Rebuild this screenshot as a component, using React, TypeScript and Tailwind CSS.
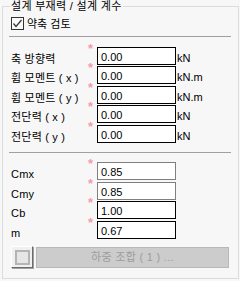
import React from 'react'

const font = { fontFamily: '"Liberation Sans", "Noto Sans CJK KR", sans-serif' }

type RowProps = {
  label: string
  value: string
  unit?: string
  mt: string
  gray?: boolean
  latin?: boolean
}

function FieldRow({ label, value, unit, mt, gray, latin }: RowProps) {
  return (
    <div className={`flex items-end ${mt}`}>
      <span className={`w-[86px] text-[11px] text-black whitespace-pre tracking-[0.2px] ${latin ? 'leading-none' : 'leading-[12px]'}`}>{label}</span>
      <div className="relative">
        <span className="absolute -left-[9px] -top-[4px] text-[13px] leading-[12px] font-bold text-[#f29cac]">*</span>
        <input
          readOnly
          defaultValue={value}
          className={`block w-[79px] h-[18px] border bg-white pl-[3px] pt-[2px] text-[11px] text-black outline-none ${gray ? 'border-[#7f7f7f]' : 'border-black'}`}
        />
      </div>
      {unit && <span className="ml-[1px] mb-[1px] text-[11px] leading-[12px] text-black">{unit}</span>}
    </div>
  )
}

export default function App() {
  return (
    <div className="w-[240px] h-[281px] bg-[#f7f7f7] pl-[2px] overflow-hidden" style={font}>
      <fieldset className="w-[237px] h-[279px] border border-[#dcdcdc]">
        <legend className="ml-[7px] px-[1px] text-[11px] leading-[12px] tracking-[0.3px] text-black">설계 부재력 / 설계 계수</legend>
        <div className="pl-[8px] pt-[5px] flex flex-col">
          {/* 약축 검토 */}
          <label className="flex items-center gap-[3px] h-[13px]">
            <span className="w-[13px] h-[13px] border border-[#333333] bg-[#fafafa] flex items-center justify-center">
              <svg width="11" height="11" viewBox="0 0 11 11">
                <path d="M1.5 5.5 L4 8.5 L9.5 2" fill="none" stroke="#333333" strokeWidth="1.2" />
              </svg>
            </span>
            <span className="text-[11px] leading-[12px] text-black">약축 검토</span>
          </label>

          <div className="mt-[6px] -ml-[2px] w-[222px] h-px bg-[#a0a0a0]" />

          <FieldRow label="축 방향력" value="0.00" unit="kN" mt="mt-[10px]" />
          <FieldRow label="휨 모멘트 ( x )" value="0.00" unit="kN.m" mt="mt-[1px]" />
          <FieldRow label="휨 모멘트 ( y )" value="0.00" unit="kN.m" mt="mt-[2px]" />
          <FieldRow label="전단력 ( x )" value="0.00" unit="kN" mt="mt-[1px]" />
          <FieldRow label="전단력 ( y )" value="0.00" unit="kN" mt="mt-[2px]" />

          <div className="mt-[9px] -ml-[2px] w-[222px] h-px bg-[#a0a0a0]" />

          <FieldRow label="Cmx" value="0.85" mt="mt-[9px]" gray latin />
          <FieldRow label="Cmy" value="0.85" mt="mt-[2px]" gray latin />
          <FieldRow label="Cb" value="1.00" mt="mt-[1px]" latin />
          <FieldRow label="m" value="0.67" mt="mt-[2px]" latin />

          <div className="mt-[7px] flex items-center">
            <button className="w-[22px] h-[22px] bg-[#f0f0f0] border border-t-white border-l-white border-r-[#6b6b6b] border-b-[#6b6b6b] shadow-[1px_1px_0_#a0a0a0] flex items-center justify-center">
              <span className="w-[15px] h-[15px] bg-[#e6e6e6] border-2 border-[#b4b4b4]" />
            </button>
            <button
              disabled
              className="ml-[3px] w-[193px] h-[21px] bg-[#cccccc] border border-[#b8b8b8] text-[11px] leading-[12px] tracking-[0.3px] text-[#9c9c9c]"
            >
              하중 조합 ( 1 ) ...
            </button>
          </div>
        </div>
      </fieldset>
    </div>
  )
}
